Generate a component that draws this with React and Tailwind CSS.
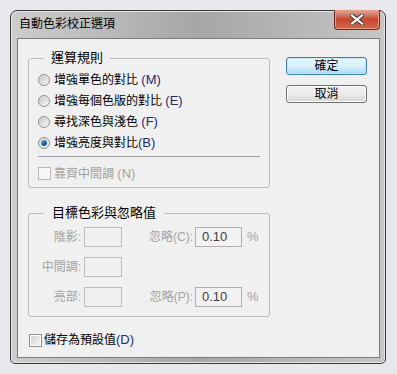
import React from 'react';

const FONT = "font-['Liberation_Sans','Noto_Sans_CJK_TC',sans-serif]";

const Radio = ({ checked }) => (
  <span className="flex h-[12px] w-[12px] items-center justify-center rounded-full border border-[#8e8f8f] bg-gradient-to-br from-[#d4d4d4] to-[#fafafa]">
    {checked ? (
      <span className="h-[6px] w-[6px] rounded-full bg-gradient-to-br from-[#7fc3f0] via-[#1c6bb0] to-[#0d3f73]" />
    ) : (
      <span className="h-[8px] w-[8px] rounded-full bg-gradient-to-br from-[#c9c9c9] to-[#f4f4f4]" />
    )}
  </span>
);

const Check = ({ disabled }) => (
  <span
    className={
      disabled
        ? 'h-[13px] w-[13px] border border-[#b9b9b9] bg-[#f7f7f7]'
        : 'flex h-[13px] w-[13px] items-center justify-center border border-[#8e8f8f] bg-white'
    }
  >
    {!disabled && <span className="h-[9px] w-[9px] bg-gradient-to-br from-[#d2d2d2] to-[#f6f6f6]" />}
  </span>
);

const Key = ({ children }) => <span className="text-[13px] text-[#1d2a70]">{children}</span>;

const radios = [
  { label: '增強單色的對比 ', key: '(M)' },
  { label: '增強每個色版的對比 ', key: '(E)' },
  { label: '尋找深色與淺色 ', key: '(F)' },
  { label: '增強亮度與對比', key: '(B)', checked: true },
];

const Field = ({ value }) => (
  <div className="flex h-[20px] w-[47px] items-center border border-[#b0b0b0] bg-[#f2f2f2] pl-[6px] text-[13px] text-[#404040]">
    {value}
  </div>
);

const Empty = () => <div className="ml-[3px] h-[20px] w-[38px] border border-[#bdbdbd] bg-[#f0f0f0]" />;

export default function App() {
  return (
    <div className={`h-[374px] w-[397px] bg-[#e8e8ec] pl-[10px] pt-[10px] ${FONT}`}>
      <div className="flex h-[354px] w-[376px] flex-col rounded-t-[7px] rounded-b-[5px] border border-[#3a3a3a] bg-gradient-to-r from-[#cdcdcd] via-[#a6a6a6] to-[#c6c6c6] pl-[6px] pr-[5px] pb-[5px] shadow-[inset_0_0_0_1px_#e4e4e4]">
        <div className="flex h-[27px] items-start justify-between">
          <span className="mt-[5px] pl-[2px] text-[12px] leading-[16px] text-black">自動色彩校正選項</span>
          <div className="-mt-[1px] flex h-[20px] w-[46px] items-center justify-center rounded-b-[4px] border border-t-0 border-[#6a2a1e] bg-gradient-to-b from-[#e8a898] via-[#c8442c] to-[#d6684a] shadow-[inset_0_0_0_1px_#e99a85]">
            <svg width="14" height="11" viewBox="0 0 14 11">
              <path d="M2 1.5 L12 9.5 M12 1.5 L2 9.5" stroke="#3a3a3a" strokeWidth="4" strokeLinecap="square" />
              <path d="M2 1.5 L12 9.5 M12 1.5 L2 9.5" stroke="#ffffff" strokeWidth="2.2" strokeLinecap="square" />
            </svg>
          </div>
        </div>

        <div className="flex flex-1 border border-[#7b7b7b] bg-[#f0f0f0] text-[12px]">
          <div className="ml-[10px] mt-[11px] flex w-[242px] flex-col">
            <fieldset className="rounded-[3px] border border-[#bcbcbc] px-0 pb-[3px]">
              <legend className="ml-[15px] px-[7px] text-[13px] leading-[16px] text-black">運算規則</legend>
              <div className="flex flex-col pt-[3px] pl-[9px]">
                {radios.map((r) => (
                  <div key={r.label} className="flex h-[21px] items-center gap-[4px] text-black">
                    <Radio checked={r.checked} />
                    <span>
                      {r.label}
                      <Key>{r.key}</Key>
                    </span>
                  </div>
                ))}
              </div>
              <div className="mx-[9px] mt-[3px] h-px bg-[#a0a0a0]" />
              <div className="mt-[6px] flex h-[21px] items-center gap-[3px] pl-[9px] text-[#a0a0a0]">
                <Check disabled />
                <span>
                  靠齊中間調 <span className="text-[13px]">(N)</span>
                </span>
              </div>
            </fieldset>

            <fieldset className="mt-[17px] rounded-[3px] border border-[#bcbcbc] px-0 pb-[9px] text-[#a3a3a3]">
              <legend className="ml-[15px] px-[8px] text-[13px] leading-[16px] text-black">目標色彩與忽略值</legend>
              <div className="flex flex-col gap-[10px] pt-[6px]">
                <div className="flex h-[20px] items-center">
                  <span className="w-[52px] text-right">陰影:</span>
                  <Empty />
                  <span className="w-[71px] text-right">忽略(C):</span>
                  <div className="ml-[2px]">
                    <Field value="0.10" />
                  </div>
                  <span className="ml-[5px] text-[13px]">%</span>
                </div>
                <div className="flex h-[20px] items-center">
                  <span className="w-[52px] text-right">中間調:</span>
                  <Empty />
                </div>
                <div className="flex h-[20px] items-center">
                  <span className="w-[52px] text-right">亮部:</span>
                  <Empty />
                  <span className="w-[71px] text-right">忽略(P):</span>
                  <div className="ml-[2px]">
                    <Field value="0.10" />
                  </div>
                  <span className="ml-[5px] text-[13px]">%</span>
                </div>
              </div>
            </fieldset>

            <div className="ml-[1px] mt-[13px] flex h-[20px] items-center gap-[2px] text-black">
              <Check />
              <span>
                儲存為預設值<Key>(D)</Key>
              </span>
            </div>
          </div>

          <div className="ml-[16px] mt-[18px] flex flex-col gap-[10px]">
            <button className="h-[18px] w-[81px] rounded-[3px] border border-[#3c7fb1] bg-gradient-to-b from-[#eaf6fd] via-[#d9f0fc] to-[#a7d9f5] text-[12px] leading-[14px] text-black shadow-[inset_0_0_0_1px_#c6e6f8]">
              確定
            </button>
            <button className="h-[18px] w-[81px] rounded-[3px] border border-[#707070] bg-gradient-to-b from-[#f2f2f2] via-[#ebebeb] to-[#d5d5d5] text-[12px] leading-[14px] text-black shadow-[inset_0_0_0_1px_#fcfcfc]">
              取消
            </button>
          </div>
        </div>
      </div>
    </div>
  );
}
